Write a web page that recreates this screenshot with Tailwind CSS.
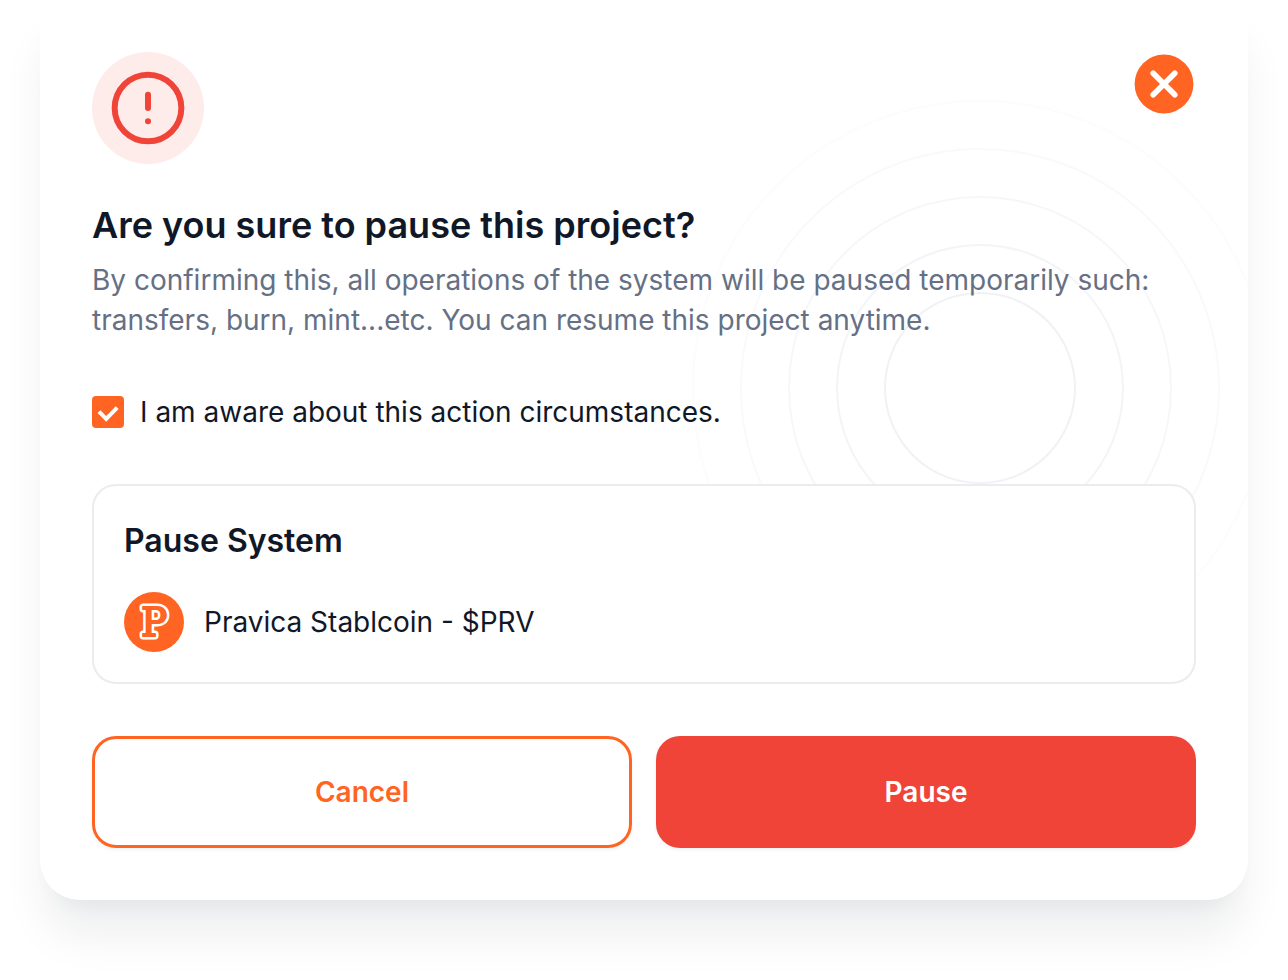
<!DOCTYPE html>
<html lang="en">
<head>
<meta charset="utf-8">
<meta name="viewport" content="width=device-width, initial-scale=1">
<title>Pause project</title>
<script src="https://cdn.jsdelivr.net/npm/@tailwindcss/browser@4"></script>
</head>
<body class="bg-white px-10 pb-20 font-[Inter,sans-serif] text-[#101828] [font-optical-sizing:none]">
<main role="dialog" aria-labelledby="title" class="relative overflow-hidden rounded-b-[40px] bg-white p-[52px] shadow-[0_40px_48px_-8px_rgba(16,24,40,0.08),0_16px_16px_-8px_rgba(16,24,40,0.03)]">
  <!-- Fading background rings -->
  <svg class="pointer-events-none absolute -right-[70px] top-[50px] size-[676px]" viewBox="-338 -338 676 676" fill="none" stroke-width="2" aria-hidden="true">
    <defs>
      <radialGradient id="fade" gradientUnits="userSpaceOnUse" cx="0" cy="0" r="338">
        <stop offset="0" stop-color="#EAECF0"/>
        <stop offset="1" stop-color="#EAECF0" stop-opacity="0"/>
      </radialGradient>
    </defs>
    <g stroke="url(#fade)">
      <circle r="95"/><circle r="143"/><circle r="191"/><circle r="239"/><circle r="287"/><circle r="335"/>
    </g>
  </svg>

  <div class="relative">
    <header class="flex items-start justify-between">
      <div class="flex size-28 items-center justify-center rounded-full bg-[#FEECEB]">
        <svg class="size-20" viewBox="0 0 24 24" fill="none" stroke="#F04438" stroke-width="1.8" stroke-linecap="round" aria-hidden="true">
          <circle cx="12" cy="12" r="10"/><path d="M12 8v4M12 16h.01"/>
        </svg>
      </div>
      <button type="button" aria-label="Close" class="size-16 cursor-pointer">
        <svg class="size-16" viewBox="0 0 64 64" fill="none" aria-hidden="true">
          <circle cx="32" cy="32" r="29.4" fill="#FF6422"/>
          <path d="M21.2 21.2l21.6 21.6M42.8 21.2L21.2 42.8" stroke="#fff" stroke-width="5.6" stroke-linecap="round"/>
        </svg>
      </button>
    </header>

    <h1 id="title" class="mt-8 text-[36px] leading-[58px] font-semibold">Are you sure to pause this project?</h1>
    <p class="mt-1.5 text-[28px] leading-10 text-[#667085]">By confirming this, all operations of the system will be paused temporarily such: transfers, burn, mint...etc. You can resume this project anytime.</p>

    <div class="mt-[52px] flex items-center gap-4">
      <span class="relative size-8">
        <input id="aware" type="checkbox" checked class="peer block size-8 appearance-none rounded border-2 border-[#FF6422] checked:bg-[#FF6422]">
        <svg class="pointer-events-none absolute inset-0 hidden size-8 peer-checked:block" viewBox="0 0 32 32" fill="none" stroke="#fff" stroke-width="4" aria-hidden="true"><path d="M7 15.6l7.2 7.2L25.2 11.6"/></svg>
      </span>
      <label for="aware" class="text-[28px] leading-10">I am aware about this action circumstances.</label>
    </div>

    <section class="mt-[52px] rounded-3xl border-2 border-[#EAECF0] bg-white p-[30px]">
      <h2 class="text-[32px] leading-[50px] font-semibold">Pause System</h2>
      <div class="mt-[26px] flex items-center gap-5">
        <!-- Outlined slab letter: wide white stroke under a narrower orange one -->
        <svg class="size-[60px]" viewBox="0 0 60 60" aria-hidden="true">
          <circle cx="30" cy="30" r="30" fill="#FF6422"/>
          <g font-family="DejaVu Serif, serif" font-size="39" text-anchor="middle" stroke-linejoin="round">
            <text x="30" y="44" fill="#fff" stroke="#fff" stroke-width="7">P</text>
            <text x="30" y="44" fill="#FF6422" stroke="#FF6422" stroke-width="2">P</text>
          </g>
        </svg>
        <span class="text-[28px] leading-10">Pravica Stablcoin - $PRV</span>
      </div>
    </section>

    <div class="mt-[52px] grid grid-cols-2 gap-6 text-[28px] leading-10 font-semibold">
      <button type="button" class="h-28 cursor-pointer rounded-3xl border-3 border-[#FF6422] bg-white text-[#FF6422] shadow-[0_2px_4px_rgba(16,24,40,0.05)]">Cancel</button>
      <button type="button" class="h-28 cursor-pointer rounded-3xl bg-[#F04438] text-white shadow-[0_2px_4px_rgba(16,24,40,0.05)]">Pause</button>
    </div>
  </div>
</main>
</body>
</html>
